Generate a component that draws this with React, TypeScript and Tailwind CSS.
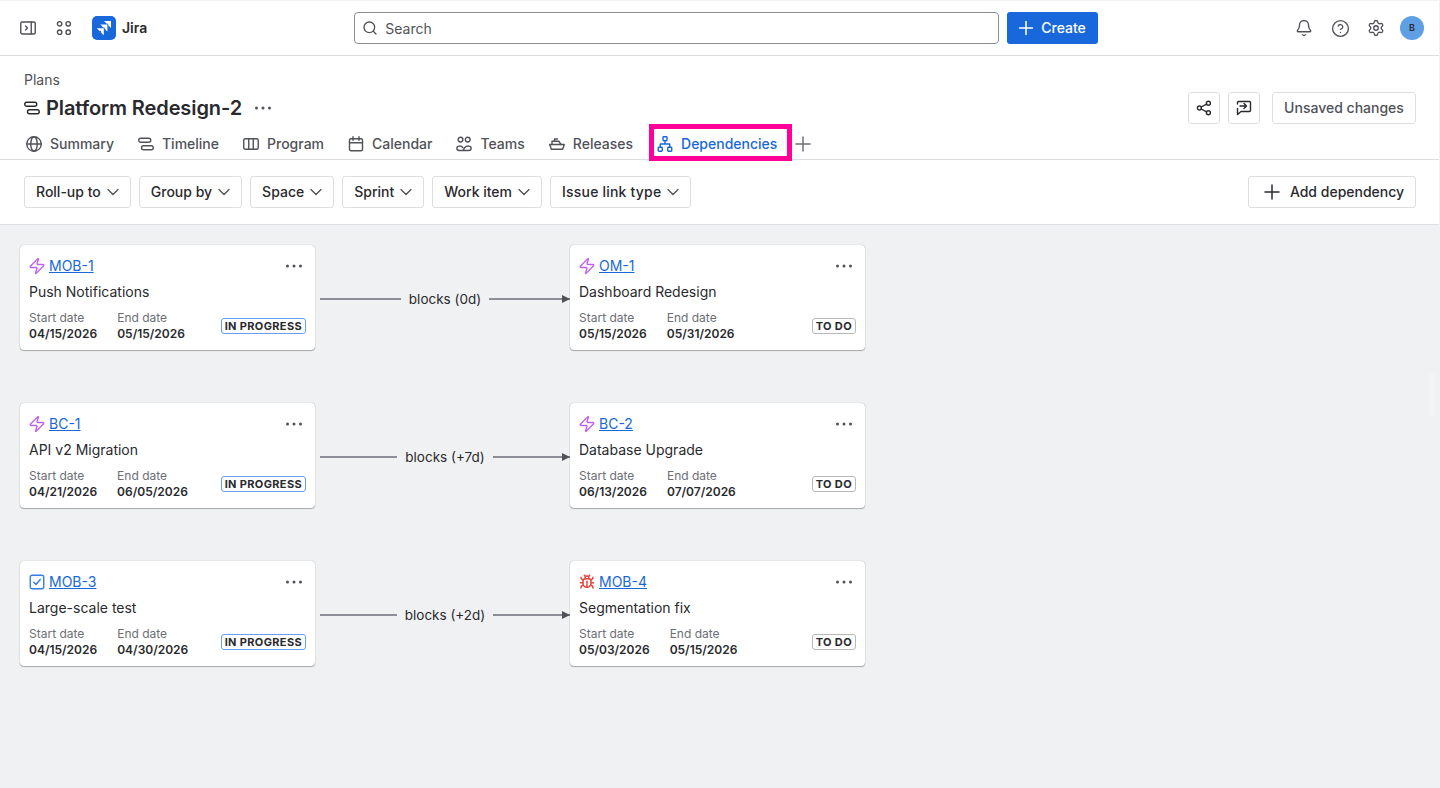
import React from 'react';
import { Bell, Bug, ChevronDown, CircleHelp, Plus, Search, Settings, Zap } from 'lucide-react';

type IconProps = { className?: string };

function Glyph({ className, children }: IconProps & { children: React.ReactNode }) {
  return (
    <svg
      viewBox="0 0 16 16"
      fill="none"
      stroke="currentColor"
      strokeWidth="1.4"
      strokeLinecap="round"
      strokeLinejoin="round"
      className={`w-4 h-4 shrink-0 ${className ?? ''}`}
    >
      {children}
    </svg>
  );
}

const SidebarIcon = (p: IconProps) => (
  <Glyph {...p}>
    <rect x="0.75" y="2" width="14.5" height="12" rx="1.5" />
    <path d="M11.25 2v12M5.5 6l2 2-2 2" />
  </Glyph>
);
const AppsIcon = (p: IconProps) => (
  <Glyph {...p}>
    <circle cx="3.6" cy="3.8" r="2.2" />
    <circle cx="12.2" cy="3.8" r="2.2" />
    <circle cx="3.6" cy="12.2" r="2.2" />
    <circle cx="12.2" cy="12.2" r="2.2" />
  </Glyph>
);
const TimelineIcon = (p: IconProps) => (
  <Glyph {...p}>
    <rect x="0.75" y="2.25" width="12" height="4" rx="2" />
    <rect x="3.5" y="9.75" width="11.75" height="4" rx="2" />
  </Glyph>
);
const GlobeIcon = (p: IconProps) => (
  <Glyph {...p}>
    <circle cx="8" cy="8" r="7.25" />
    <ellipse cx="8" cy="8" rx="3.25" ry="7.25" />
    <path d="M.75 8h14.5" />
  </Glyph>
);
const ProgramIcon = (p: IconProps) => (
  <Glyph {...p}>
    <rect x="0.75" y="2.75" width="14.5" height="10.5" rx="1.5" />
    <path d="M5.75 2.75v10.5M10.25 2.75v10.5" />
  </Glyph>
);
const CalendarIcon = (p: IconProps) => (
  <Glyph {...p}>
    <rect x="1.5" y="2.75" width="13" height="12" rx="1.5" />
    <path d="M1.5 6.75h13M5 .75v3.5M11 .75v3.5" />
  </Glyph>
);
const TeamsIcon = (p: IconProps) => (
  <Glyph {...p}>
    <circle cx="4.5" cy="3.6" r="2.4" />
    <circle cx="11.7" cy="3.6" r="2.4" />
    <path d="M8 14.5H3.2a2.2 2.2 0 0 1-.2-4.4c1.8-.2 3 .4 3.8 1.4M8 14.5h4.8a2.2 2.2 0 0 0 .2-4.4c-1.8-.2-3.4.4-4.4 1.6-.5.6-.8 1.6-1.6 2.8" />
  </Glyph>
);
const ShipIcon = (p: IconProps) => (
  <Glyph {...p}>
    <path d="M.75 8.5h14.5l-1.6 4.75H2.35z" />
    <path d="M3 8.5V5.25h6.75l2.25 3.25M5.5 5.25V3h3" />
  </Glyph>
);
const TreeIcon = (p: IconProps) => (
  <Glyph {...p}>
    <rect x="6" y="0.75" width="4" height="4" rx="0.75" />
    <rect x="1.25" y="11.25" width="4" height="4" rx="0.75" />
    <rect x="10.75" y="11.25" width="4" height="4" rx="0.75" />
    <path d="M8 4.75V8M3.25 11.25V8h9.5v3.25" />
  </Glyph>
);
const ShareIcon = (p: IconProps) => (
  <Glyph {...p}>
    <circle cx="3.4" cy="8" r="2" />
    <circle cx="12.4" cy="3.2" r="2" />
    <circle cx="12.4" cy="12.8" r="2" />
    <path d="M5.2 7l5.4-2.9M5.2 9l5.4 2.9" />
  </Glyph>
);
const FeedbackIcon = (p: IconProps) => (
  <Glyph {...p}>
    <path d="M1.5 4V2.5a1 1 0 0 1 1-1h11a1 1 0 0 1 1 1v8a1 1 0 0 1-1 1H5l-3.5 3v-6" />
    <path d="M4 6h6.5M8 3.5L10.5 6 8 8.5" />
  </Glyph>
);
const TaskIcon = (p: IconProps) => (
  <Glyph {...p}>
    <rect x="1.25" y="1.25" width="13.5" height="13.5" rx="2" />
    <path d="M4.75 8.25l2.25 2.25 4.25-5" />
  </Glyph>
);
const DotsIcon = ({ className }: IconProps) => (
  <svg viewBox="0 0 16 16" fill="currentColor" className={`w-4 h-4 shrink-0 ${className ?? ''}`}>
    <circle cx="1.5" cy="8" r="1.5" />
    <circle cx="8" cy="8" r="1.5" />
    <circle cx="14.5" cy="8" r="1.5" />
  </svg>
);

function JiraLogo() {
  return (
    <span className="w-6 h-6 rounded-[5px] bg-[#1868db] flex items-center justify-center shrink-0">
      <svg viewBox="0 0 24 24" fill="#fff" className="w-6 h-6">
        <path d="M12 5H19V12L16.2 9.2V7.8H14.8Z" />
        <path d="M8.4 8.6H15.4V15.6L12.6 12.8V11.4H11.2Z" />
        <path d="M4.8 12.2H11.8V19.2L9 16.4V15H7.6Z" />
      </svg>
    </span>
  );
}

const tabs = [
  { label: 'Summary', icon: GlobeIcon },
  { label: 'Timeline', icon: TimelineIcon },
  { label: 'Program', icon: ProgramIcon },
  { label: 'Calendar', icon: CalendarIcon },
  { label: 'Teams', icon: TeamsIcon },
  { label: 'Releases', icon: ShipIcon },
];

const filters = ['Roll-up to', 'Group by', 'Space', 'Sprint', 'Work item', 'Issue link type'];

type Item = {
  kind: 'epic' | 'task' | 'bug';
  id: string;
  title: string;
  start: string;
  end: string;
  status: 'IN PROGRESS' | 'TO DO';
};

const links: { from: Item; label: string; to: Item }[] = [
  {
    from: { kind: 'epic', id: 'MOB-1', title: 'Push Notifications', start: '04/15/2026', end: '05/15/2026', status: 'IN PROGRESS' },
    label: 'blocks (0d)',
    to: { kind: 'epic', id: 'OM-1', title: 'Dashboard Redesign', start: '05/15/2026', end: '05/31/2026', status: 'TO DO' },
  },
  {
    from: { kind: 'epic', id: 'BC-1', title: 'API v2 Migration', start: '04/21/2026', end: '06/05/2026', status: 'IN PROGRESS' },
    label: 'blocks (+7d)',
    to: { kind: 'epic', id: 'BC-2', title: 'Database Upgrade', start: '06/13/2026', end: '07/07/2026', status: 'TO DO' },
  },
  {
    from: { kind: 'task', id: 'MOB-3', title: 'Large-scale test', start: '04/15/2026', end: '04/30/2026', status: 'IN PROGRESS' },
    label: 'blocks (+2d)',
    to: { kind: 'bug', id: 'MOB-4', title: 'Segmentation fix', start: '05/03/2026', end: '05/15/2026', status: 'TO DO' },
  },
];

function KindIcon({ kind }: { kind: Item['kind'] }) {
  if (kind === 'task') return <TaskIcon className="text-[#357de8]" />;
  if (kind === 'bug') return <Bug size={16} strokeWidth={2.2} className="text-[#e2483d] shrink-0" />;
  return <Zap size={18} strokeWidth={1.9} className="text-[#bf63f3] shrink-0 -mx-px" />;
}

function WorkCard({ item }: { item: Item }) {
  return (
    <div className="w-[295px] h-[105px] shrink-0 bg-white rounded-[4px] shadow-[0_1px_1px_#1e1f2150,0_0_1px_#1e1f2170] px-[9px] pt-[12px]">
      <div className="flex items-center h-[18px]">
        <KindIcon kind={item.kind} />
        <a className="ml-1 text-sm leading-[18px] text-[#1868db] underline">{item.id}</a>
        <DotsIcon className="ml-auto mr-1 text-[#505258]" />
      </div>
      <div className="mt-2 text-sm leading-[18px] text-[#292a2e]">{item.title}</div>
      <div className="mt-[9px] flex items-center justify-between">
        <div className="flex gap-5 text-xs leading-[15px]">
          <div>
            <div className="text-[#6b6e76]">Start date</div>
            <div className="mt-px font-semibold text-[#292a2e]">{item.start}</div>
          </div>
          <div>
            <div className="text-[#6b6e76]">End date</div>
            <div className="mt-px font-semibold text-[#292a2e]">{item.end}</div>
          </div>
        </div>
        <span
          className={`mt-px h-4 px-[3px] flex items-center rounded-[3px] border text-[11px] font-bold leading-none tracking-[0.35px] text-[#292a2e] ${
            item.status === 'TO DO' ? 'border-[#b7b9be]' : 'border-[#669df1]'
          }`}
        >
          {item.status}
        </span>
      </div>
    </div>
  );
}

function Connector({ label }: { label: string }) {
  return (
    <div className="flex-1 flex items-center pl-[5px] mt-[3px] text-[13.5px] text-[#292a2e]">
      <div className="flex-1 h-[1.5px] bg-[#8c8f97]" />
      <span className="px-2 whitespace-nowrap">{label}</span>
      <div className="flex-1 h-[1.5px] bg-[#8c8f97]" />
      <svg viewBox="0 0 8 8" fill="#505258" className="w-2 h-2 -ml-2 shrink-0">
        <path d="M0 0l8 4-8 4z" />
      </svg>
    </div>
  );
}

function OutlineButton({ className, children }: { className?: string; children: React.ReactNode }) {
  return (
    <button className={`h-8 flex items-center justify-center rounded-[3px] border border-[#dcdfe4] bg-white text-sm font-medium text-[#292a2e] ${className ?? ''}`}>
      {children}
    </button>
  );
}

export default function App() {
  return (
    <div className="relative h-screen overflow-hidden flex flex-col bg-[#f0f1f2] font-['Inter',sans-serif] border-t border-r border-[#f0f1f2]">
      <header className="h-[55px] shrink-0 bg-white border-b border-[#dcdfe4] flex items-center pl-5 pr-[15px]">
        <SidebarIcon className="text-[#505258]" />
        <AppsIcon className="ml-5 text-[#505258]" />
        <span className="ml-5"><JiraLogo /></span>
        <span className="ml-[6px] text-sm font-semibold text-[#292a2e]">Jira</span>
        <div className="ml-[207px] w-[645px] h-8 flex items-center rounded-[4px] border border-[#8c8f97] pl-[7px] text-sm text-[#505258]">
          <Search size={16} strokeWidth={2} />
          <span className="ml-[7px] mt-px">Search</span>
        </div>
        <button className="ml-2 h-8 w-[91px] pl-2 flex items-center gap-1 rounded-[3px] bg-[#1868db] text-sm font-medium text-white">
          <Plus size={22} strokeWidth={1.7} />
          Create
        </button>
        <div className="ml-auto flex items-center text-[#505258]">
          <span className="w-9 flex justify-center"><Bell size={18} strokeWidth={1.8} /></span>
          <span className="w-9 flex justify-center"><CircleHelp size={19} strokeWidth={1.7} /></span>
          <span className="w-9 flex justify-center"><Settings size={18} strokeWidth={1.8} /></span>
          <span className="w-6 h-6 ml-[6px] rounded-full bg-[#5f9fe3] flex items-center justify-center text-[9px] font-semibold text-[#292a2e]">B</span>
        </div>
      </header>

      <section className="shrink-0 bg-white border-b border-[#dcdfe4] pl-6 pr-[23px] pt-[16px] h-[104px]">
        <div className="text-sm leading-4 text-[#505258]">Plans</div>
        <div className="flex items-center h-8 mt-[4px]">
          <TimelineIcon className="text-[#292a2e]" />
          <h1 className="ml-[6px] text-xl font-semibold tracking-[-0.1px] text-[#292a2e]">Platform Redesign-2</h1>
          <DotsIcon className="ml-[13px] text-[#505258]" />
          <div className="ml-auto flex items-center">
            <OutlineButton className="w-8"><ShareIcon className="text-[#292a2e]" /></OutlineButton>
            <OutlineButton className="w-8 ml-2"><FeedbackIcon className="text-[#292a2e]" /></OutlineButton>
            <OutlineButton className="w-[144px] ml-3 text-[#505258]">Unsaved changes</OutlineButton>
          </div>
        </div>
        <nav className="mt-[2px] -ml-[24px] pl-[26px] h-[36px] flex items-center gap-6 text-sm font-medium text-[#505258]">
          {tabs.map(({ label, icon: Icon }) => (
            <div key={label} className="flex items-center gap-2">
              <Icon />
              {label}
            </div>
          ))}
          <div className="relative flex items-center gap-2 text-[#1868db]">
            <TreeIcon />
            Dependencies
            <span className="absolute -left-2 -right-[15px] -top-[10px] h-[37px] border-[5px] border-[#ff0099]" />
          </div>
          <Plus size={24} strokeWidth={1.5} className="-ml-[10px] text-[#6b6e76]" />
        </nav>
      </section>

      <section className="h-[65px] shrink-0 bg-white border-b border-[#dcdfe4] flex items-center gap-2 pl-6 pr-[23px]">
        {filters.map((f) => (
          <OutlineButton key={f} className="px-[11px] gap-[6px]">
            <span className={f === 'Issue link type' ? 'tracking-[0.2px]' : ''}>{f}</span>
            <ChevronDown size={20} strokeWidth={1.6} className="-mx-1 text-[#505258]" />
          </OutlineButton>
        ))}
        <OutlineButton className="ml-auto w-[168px] gap-[6px]">
          <Plus size={24} strokeWidth={1.5} />
          Add dependency
        </OutlineButton>
      </section>

      <main className="flex-1 pl-5 pt-5 flex flex-col gap-[53px]">
        {links.map((link) => (
          <div key={link.from.id} className="flex items-center w-[845px]">
            <WorkCard item={link.from} />
            <Connector label={link.label} />
            <WorkCard item={link.to} />
          </div>
        ))}
      </main>

      <span className="absolute right-[4px] top-[372px] w-[6px] h-[42px] rounded-full bg-[#f3f4f5]" />
    </div>
  );
}
